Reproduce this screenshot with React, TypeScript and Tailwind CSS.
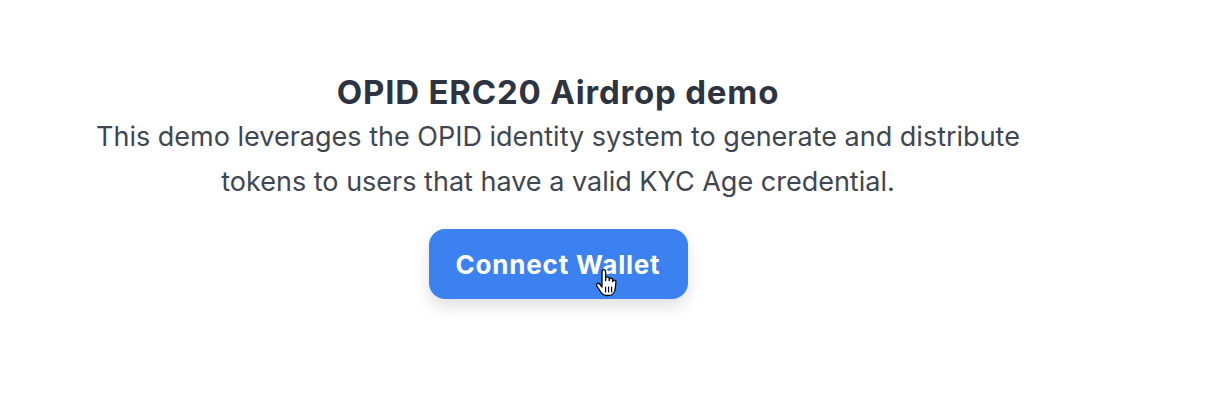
export default function App() {
  return (
    <div className="w-[1222px] h-[408px] bg-white overflow-hidden" style={{ fontFamily: "Inter, 'Noto Sans', sans-serif" }}>
      <div className="w-[1116px] flex flex-col items-center pt-[72px]">
        <h1 className="text-[33px] leading-[40px] font-bold text-[#2d3440] tracking-[0.8px]">OPID ERC20 Airdrop demo</h1>
        <p className="mt-[2px] text-[27px] leading-[45px] text-[#3f4650] text-center w-[940px]">
          This demo leverages the OPID identity system to generate and distribute tokens to users that have a valid KYC Age credential.
        </p>
        <div className="relative mt-[25px]">
          <button className="w-[259px] h-[70px] rounded-[16px] bg-[#3b82f0] text-white text-[26px] font-bold tracking-[0.8px] shadow-[0_8px_16px_rgba(0,0,0,0.12)]">
            Connect Wallet
          </button>
          <svg className="absolute left-[166px] top-[40px]" width="24" height="30" viewBox="0 0 24 30">
            <path d="M7 2.5c0-1 .8-1.8 1.8-1.8s1.8.8 1.8 1.8v9l.2-2.2c.1-1 .9-1.6 1.800-1.5s1.6.9 1.6 1.8v2l.2-1.1c.2-.9 1-1.5 1.9-1.3s1.4 1 1.4 1.9v1.6l.3-.6c.4-.8 1.3-1.1 2.1-.7s1 1.3.8 2.1L20 21c-.6 3.2-3.4 5.5-6.7 5.5h-2c-2 0-3.8-1-4.9-2.6L1.8 17c-.5-.8-.3-1.9.5-2.4s1.8-.3 2.4.4L7 18V2.5z" fill="white" stroke="black" strokeWidth="1.3" strokeLinejoin="round" />
            <path d="M10.6 18v5M13.6 18v5M16.6 18v5" stroke="black" strokeWidth="1.2" strokeLinecap="round" />
          </svg>
        </div>
      </div>
    </div>
  );
}
